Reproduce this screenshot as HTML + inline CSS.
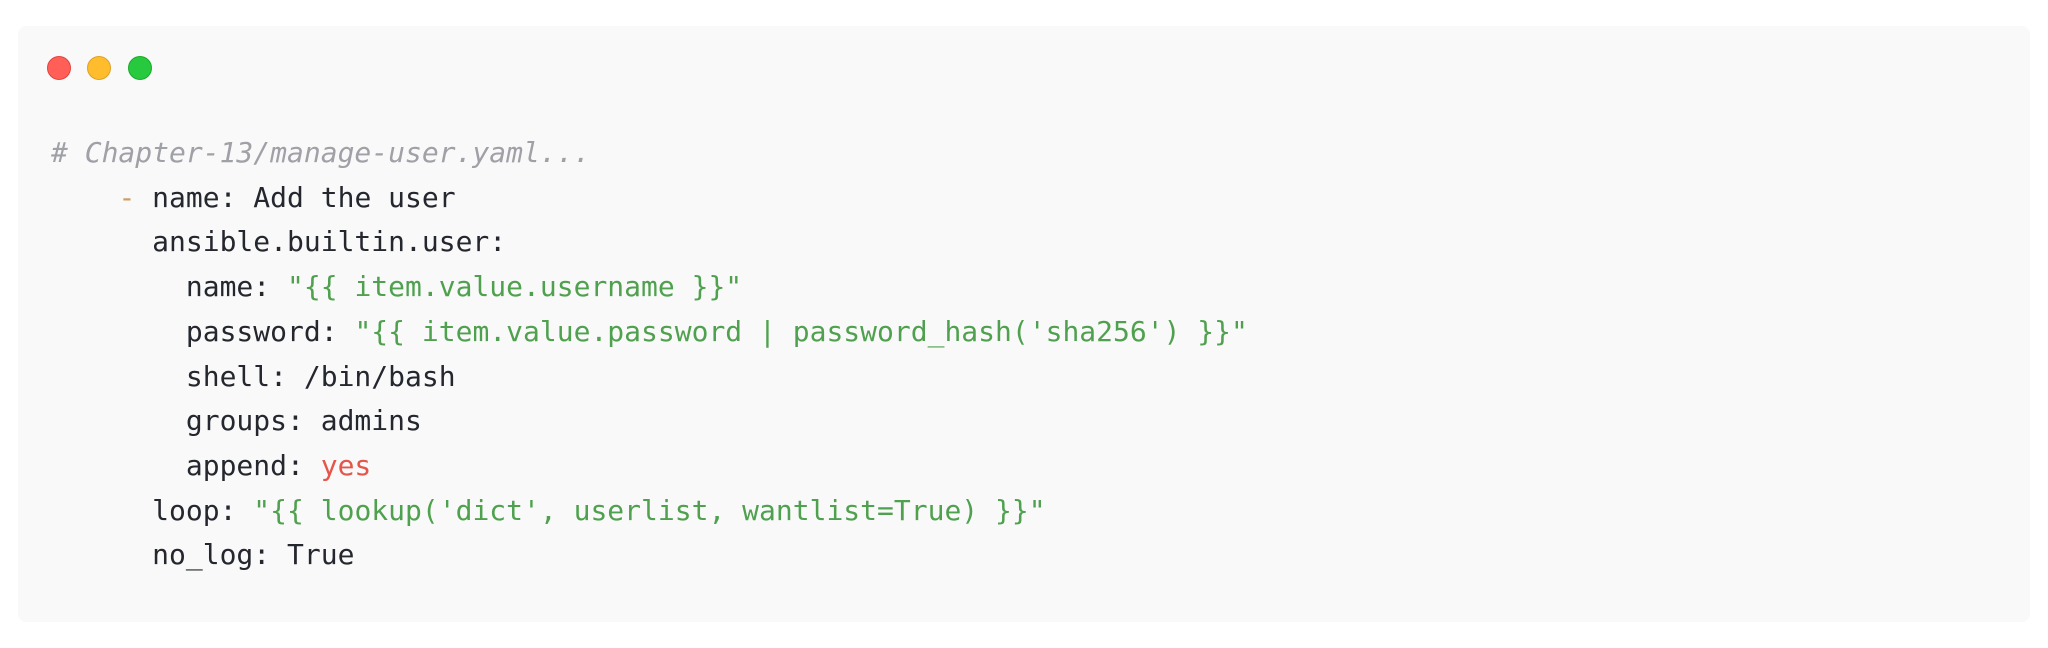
<!DOCTYPE html>
<html><head><meta charset="utf-8"><style>
html,body{margin:0;padding:0;background:#fff;width:2048px;height:648px;overflow:hidden}
.box{position:absolute;left:18px;top:26px;width:2012px;height:596px;background:#f9f9f9;border-radius:8px}
.dot{position:absolute;top:56px;width:24px;height:24px;border-radius:50%;box-sizing:border-box}
pre{position:absolute;left:51px;top:131px;margin:0;font-family:"DejaVu Sans Mono","Liberation Mono",monospace;font-size:28px;line-height:44.7px;color:#24272e}
.c{color:#a0a1a7;font-style:italic}.o{color:#d19a66}.g{color:#50a14f}.r{color:#e45649}
</style></head><body>
<div class="box"></div>
<div class="dot" style="left:47px;background:#ff5f56;border:1px solid #e0443e"></div>
<div class="dot" style="left:87px;background:#ffbd2e;border:1px solid #dea123"></div>
<div class="dot" style="left:128px;background:#27c93f;border:1px solid #1aab29"></div>
<pre><span class="c"># Chapter-13/manage-user.yaml...</span>
    <span class="o">-</span> name: Add the user
      ansible.builtin.user:
        name: <span class="g">"{{ item.value.username }}"</span>
        password: <span class="g">"{{ item.value.password | password_hash('sha256') }}"</span>
        shell: /bin/bash
        groups: admins
        append: <span class="r">yes</span>
      loop: <span class="g">"{{ lookup('dict', userlist, wantlist=True) }}"</span>
      no_log: True</pre>
</body></html>
